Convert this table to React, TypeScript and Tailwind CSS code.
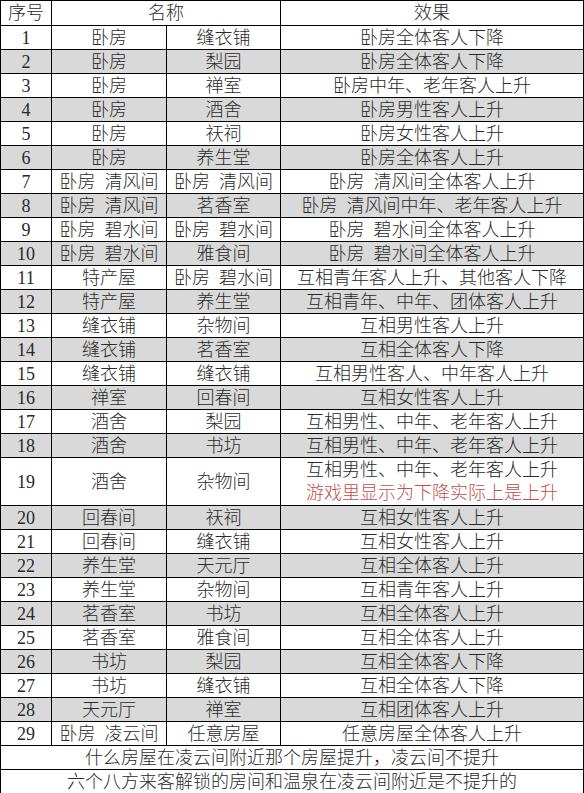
import React from 'react';

type Row = {
  no: number;
  a: string;
  b: string;
  effect: string;
  note?: string;
};

// 房屋组合效果表
const rows: Row[] = [
  { no: 1, a: '卧房', b: '缝衣铺', effect: '卧房全体客人下降' },
  { no: 2, a: '卧房', b: '梨园', effect: '卧房全体客人下降' },
  { no: 3, a: '卧房', b: '禅室', effect: '卧房中年、老年客人上升' },
  { no: 4, a: '卧房', b: '酒舍', effect: '卧房男性客人上升' },
  { no: 5, a: '卧房', b: '祆祠', effect: '卧房女性客人上升' },
  { no: 6, a: '卧房', b: '养生堂', effect: '卧房全体客人上升' },
  { no: 7, a: '卧房  清风间', b: '卧房  清风间', effect: '卧房  清风间全体客人上升' },
  { no: 8, a: '卧房  清风间', b: '茗香室', effect: '卧房  清风间中年、老年客人上升' },
  { no: 9, a: '卧房  碧水间', b: '卧房  碧水间', effect: '卧房  碧水间全体客人上升' },
  { no: 10, a: '卧房  碧水间', b: '雅食间', effect: '卧房  碧水间全体客人上升' },
  { no: 11, a: '特产屋', b: '卧房  碧水间', effect: '互相青年客人上升、其他客人下降' },
  { no: 12, a: '特产屋', b: '养生堂', effect: '互相青年、中年、团体客人上升' },
  { no: 13, a: '缝衣铺', b: '杂物间', effect: '互相男性客人上升' },
  { no: 14, a: '缝衣铺', b: '茗香室', effect: '互相全体客人下降' },
  { no: 15, a: '缝衣铺', b: '缝衣铺', effect: '互相男性客人、中年客人上升' },
  { no: 16, a: '禅室', b: '回春间', effect: '互相女性客人上升' },
  { no: 17, a: '酒舍', b: '梨园', effect: '互相男性、中年、老年客人上升' },
  { no: 18, a: '酒舍', b: '书坊', effect: '互相男性、中年、老年客人上升' },
  { no: 19, a: '酒舍', b: '杂物间', effect: '互相男性、中年、老年客人上升', note: '游戏里显示为下降实际上是上升' },
  { no: 20, a: '回春间', b: '祆祠', effect: '互相女性客人上升' },
  { no: 21, a: '回春间', b: '缝衣铺', effect: '互相女性客人上升' },
  { no: 22, a: '养生堂', b: '天元厅', effect: '互相全体客人上升' },
  { no: 23, a: '养生堂', b: '杂物间', effect: '互相青年客人上升' },
  { no: 24, a: '茗香室', b: '书坊', effect: '互相全体客人上升' },
  { no: 25, a: '茗香室', b: '雅食间', effect: '互相全体客人上升' },
  { no: 26, a: '书坊', b: '梨园', effect: '互相全体客人下降' },
  { no: 27, a: '书坊', b: '缝衣铺', effect: '互相全体客人下降' },
  { no: 28, a: '天元厅', b: '禅室', effect: '互相团体客人上升' },
  { no: 29, a: '卧房  凌云间', b: '任意房屋', effect: '任意房屋全体客人上升' },
];

const cell = 'border border-black text-center align-middle p-0 leading-none whitespace-pre';

export default function App() {
  return (
    <div className="w-[584px] h-[793px] overflow-hidden bg-white text-[#2a2a2a] font-['Liberation_Serif','Noto_Sans_CJK_SC',serif] text-[18px] font-light">
      <table className="w-[583px] table-fixed border-collapse">
        <colgroup>
          <col className="w-[51px]" />
          <col className="w-[115px]" />
          <col className="w-[114px]" />
          <col className="w-[303px]" />
        </colgroup>
        <tbody>
          <tr className="h-[25px]">
            <td className={cell}>序号</td>
            <td className={cell} colSpan={2}>名称</td>
            <td className={cell}>效果</td>
          </tr>
          {rows.map(r => {
            const grey = r.no % 2 === 0;
            return (
              <tr
                key={r.no}
                className={`${r.note ? 'h-[48px]' : 'h-[24px]'} ${grey ? 'bg-[#d9d9d9]' : 'bg-white'}`}
              >
                <td className={cell}>{r.no}</td>
                <td className={cell}>{r.a}</td>
                <td className={cell}>{r.b}</td>
                <td className={cell}>
                  {r.note ? (
                    <div className="flex flex-col items-center gap-[5px]">
                      <span>{r.effect}</span>
                      <span className="text-[#c0504d]">{r.note}</span>
                    </div>
                  ) : (
                    r.effect
                  )}
                </td>
              </tr>
            );
          })}
          <tr className="h-[24px]">
            <td className={cell} colSpan={4}>什么房屋在凌云间附近那个房屋提升，凌云间不提升</td>
          </tr>
          <tr className="h-[24px]">
            <td className={cell} colSpan={4}>六个八方来客解锁的房间和温泉在凌云间附近是不提升的</td>
          </tr>
        </tbody>
      </table>
    </div>
  );
}
